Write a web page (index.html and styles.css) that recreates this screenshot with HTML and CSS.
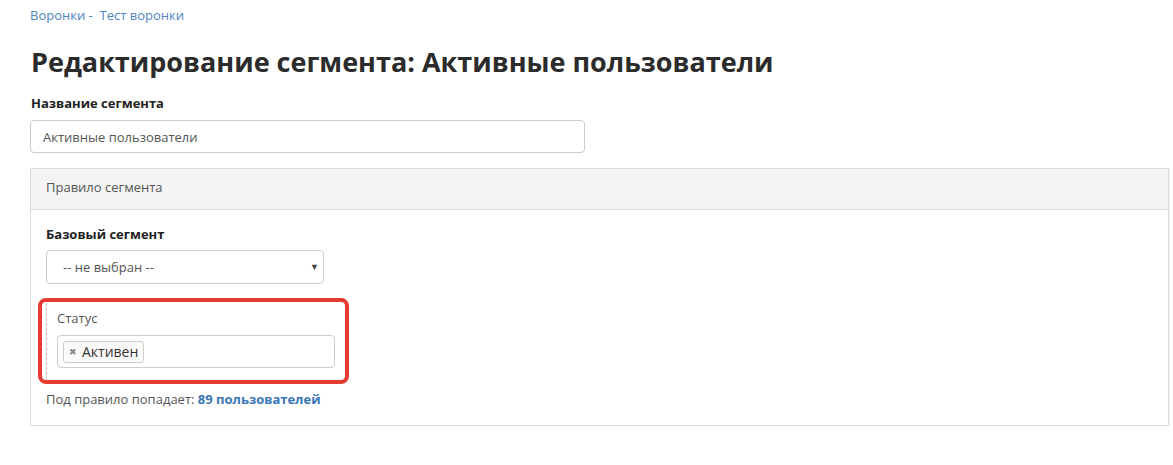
FILE: index.html
```html
<!DOCTYPE html>
<html lang="ru">
<head>
    <meta charset="UTF-8">
    <title>Редактирование сегмента</title>
    <link rel="stylesheet" href="styles.css">
</head>
<body>
    <div class="breadcrumbs">
        <a href="#">Воронки -</a>&nbsp; <a href="#">Тест воронки</a>
    </div>

    <h1>Редактирование сегмента: Активные пользователи</h1>

    <label class="field-label" for="segmentName">Название сегмента</label>
    <input type="text" id="segmentName" class="text-input" value="Активные пользователи">

    <div class="panel">
        <div class="panel-heading">Правило сегмента</div>
        <div class="panel-body">
            <label class="field-label" for="baseSegment">Базовый сегмент</label>
            <div class="select-box">
                <select id="baseSegment">
                    <option>-- не выбран --</option>
                </select>
                <span class="caret">▼</span>
            </div>

            <div class="condition">
                <div class="condition-inner">
                    <div class="condition-label">Статус</div>
                    <div class="tag-input">
                        <span class="tag"><span class="tag-remove">✖</span>Активен</span>
                    </div>
                </div>
            </div>

            <p class="rule-count">Под правило попадает: <a href="#">89 пользователей</a></p>
        </div>
    </div>
</body>
</html>
```

FILE: styles.css
```css
body {
    margin: 0;
    padding: 0 4px 0 30px;
    font-family: "Open Sans", "Liberation Sans", sans-serif;
    font-size: 13px;
    color: #333;
    background: #fff;
}

a {
    color: #3a76b8;
    text-decoration: none;
}

.breadcrumbs {
    padding: 5px 0 0 0;
    line-height: 20px;
}

.breadcrumbs a {
    color: #4f83c2;
}

h1 {
    margin: 17px 0 0 1px;
    font-size: 27px;
    line-height: 40px;
    font-weight: 700;
    color: #2b2b2b;
}

.field-label {
    display: block;
    font-weight: 700;
    line-height: 18px;
    margin: 12px 0 8px 1px;
    color: #222;
}

.text-input {
    display: block;
    width: 555px;
    height: 33px;
    box-sizing: border-box;
    padding: 0 12px;
    border: 1px solid #ccc;
    border-radius: 4px;
    font-family: inherit;
    font-size: 13px;
    color: #555;
}

.panel {
    margin-top: 15px;
    border: 1px solid #ddd;
    box-shadow: 1px 1px 1px rgba(0, 0, 0, 0.05);
}

.panel-heading {
    height: 41px;
    box-sizing: border-box;
    line-height: 37px;
    padding: 0 15px 3px;
    background: #f4f4f4;
    border-bottom: 1px solid #ddd;
    color: #555;
}

.panel-body {
    padding: 15px 15px 17px;
}

.panel-body .field-label {
    margin: 0 0 7px 0;
}

.select-box {
    position: relative;
    width: 278px;
}

.select-box select {
    display: block;
    width: 100%;
    height: 34px;
    padding: 0 16px;
    border: 1px solid #ccc;
    border-radius: 4px;
    background: #fff;
    font-family: inherit;
    font-size: 13px;
    color: #555;
    appearance: none;
}

.caret {
    position: absolute;
    right: 5px;
    top: 10px;
    font-size: 9px;
    color: #444;
}

.condition {
    position: relative;
    margin-top: 14px;
    padding: 5px 0 4px 0;
    width: 289px;
}

.condition::before {
    content: "";
    position: absolute;
    top: 0;
    bottom: 0;
    left: -8px;
    right: -14px;
    border: 4px solid #e53b30;
    border-radius: 8px;
}

.condition-inner {
    border-left: 1px dashed #bbb;
    padding: 6px 0 12px 10px;
}

.condition-label {
    line-height: 18px;
    color: #555;
    margin-bottom: 8px;
}

.tag-input {
    height: 33px;
    box-sizing: border-box;
    padding: 5px;
    border: 1px solid #ccc;
    border-radius: 4px;
}

.tag {
    display: inline-block;
    height: 22px;
    line-height: 20px;
    box-sizing: border-box;
    padding: 0 5px;
    border: 1px solid #ccc;
    border-radius: 3px;
    background: #fafafa;
    color: #333;
    font-size: 14px;
}

.tag-remove {
    display: inline-block;
    vertical-align: top;
    font-size: 9px;
    color: #888;
    margin-right: 5px;
}

.rule-count {
    margin: 6px 0 0 0;
    line-height: 18px;
    color: #555;
}

.rule-count a {
    font-weight: 700;
}
```
